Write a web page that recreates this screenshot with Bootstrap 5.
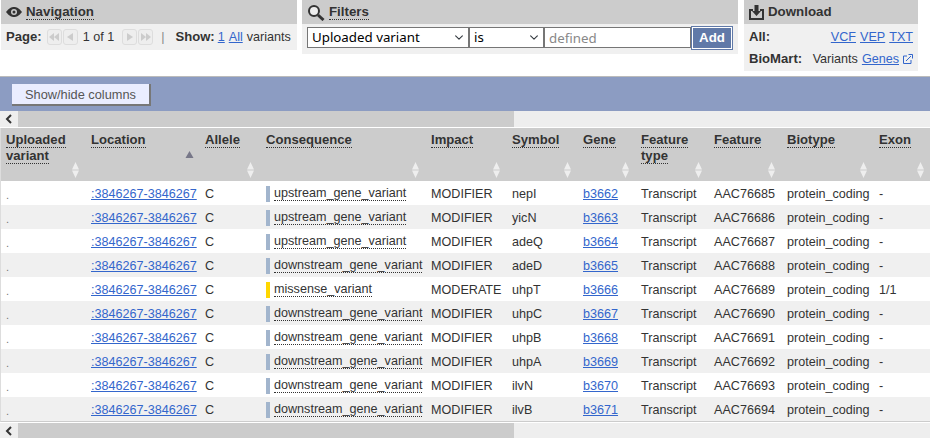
<!DOCTYPE html>
<html lang="en">
<head>
    <meta charset="UTF-8">
    <title>Variant results</title>
    <link href="https://cdn.jsdelivr.net/npm/bootstrap@5.3.0/dist/css/bootstrap.min.css" rel="stylesheet">
    <style>
        body { margin: 0; background: #fff; color: #333; font: 12.6px/16px "Liberation Sans", Arial, sans-serif; overflow: hidden; }
        a { color: #3366cc; }
        b { font-size: 13.1px; }

        /* top panels */
        .top-area { height: 76px; padding-left: 1px; align-items: flex-start; }
        .panel-nav { width: 296px; margin-right: 5px; }
        .panel-filter { width: 436px; margin-right: 6px; }
        .panel-dl { width: 174px; }
        .panel-head { height: 24px; background: #ccc; font-weight: 700; font-size: 13.3px; padding: 0 5px; gap: 4px; }
        .panel-head span { border-bottom: 1px dotted #333; line-height: 15px; }
        .panel-head span.plain { border-bottom-color: transparent; }
        .panel-body-nav { height: 26px; background: #f0f0f0; padding-left: 5px; }
        .panel-body-filter { height: 30px; background: #f0f0f0; padding: 0 0 3px 5px; }
        .panel-body-dl { height: 47px; background: #f0f0f0; padding: 5px 5px 0 5px; }
        .page-label { margin-right: 5px; }
        .pg-btn { width: 15px; height: 16px; border: 1px solid #ddd; border-radius: 3px; background: #eee; margin-right: 1px; }
        .sep { margin: 0 11px 0 7px; color: #888; }
        .show-label { margin-right: 3px; }
        .dl-line { margin-bottom: 2px; }

        /* filter controls */
        .form-select.flt, .form-control.flt {
            height: 21px; min-height: 0; border-radius: 0; border: 1px solid #767676; padding: 0 0 0 4px; color: #000;
            font: 13.3px/19px "Noto Sans", "Liberation Sans", sans-serif; box-shadow: none;
        }
        .form-select.flt { background-size: 12px 9px; background-position: right 3px center; }
        .flt-a { width: 162px; }
        .flt-b { width: 75px; }
        .flt-c { width: 147px; }
        .form-control.flt::placeholder { color: #888; }
        .add-btn { width: 42px; height: 24px; padding: 0; border-radius: 0; background: #6079a8; color: #fff; border: 1px solid #6079a8; outline: 1px solid #fff; outline-offset: -2px; font: 700 13.3px "Liberation Sans", sans-serif; }
        .add-btn:hover { background: #6079a8; color: #fff; }

        /* blue bar */
        .tool-bar { height: 35px; background: #8c9cc2; border-top: 1px solid #bbb; padding: 7px 0 0 12px; }
        .col-btn { width: 139px; height: 22px; padding: 0; border-radius: 0; background: #eaedff; color: #555; font: 12.8px "Liberation Sans", sans-serif; border: 0; border-right: 2px solid #777; border-bottom: 2px solid #777; }
        .col-btn:hover { background: #eaedff; color: #555; }

        /* fake scrollbars */
        .scroll-x { height: 16px; background: #eee; }
        .scroll-x .arrow { width: 18px; }
        .scroll-x .thumb { width: 496px; background: #ccc; }
        .scroll-low { height: 15px; margin-top: 1px; }

        /* results table */
        .tbl-wrap { margin-top: 1px; border-bottom: 1px solid #ccc; border-left: 1px solid #ddd; }
        table.vep { width: 930px; table-layout: fixed; border-collapse: collapse; margin: 0; }
        table.vep th { position: relative; height: 53px; vertical-align: top; background: #ccc; color: #333; font-size: 13.1px; font-weight: 700; line-height: 16px; padding: 4px 0 0 5px; border: 0; }
        table.vep th span { border-bottom: 1px dotted #333; }
        table.vep td { height: 24px; padding: 1px 0 0 5px; vertical-align: middle; white-space: nowrap; overflow: visible; border: 0; color: #333; background: #fff; }
        table.vep tbody tr:nth-child(even) td { background: #f0f0f0; }
        .sort-ico { position: absolute; right: 6px; bottom: 3px; }
        table.vep th .loc-up { bottom: 22px; }
        .w1 { width: 85px; } .w2 { width: 114px; } .w3 { width: 61px; } .w4 { width: 165px; }
        .w5 { width: 81px; } .w6 { width: 71px; } .w7 { width: 58px; } .w8 { width: 73px; }
        .w9 { width: 73px; } .w10 { width: 92px; } .w11 { width: 57px; }
        table.vep td.dot-cell { padding-top: 4px; font-size: 11px; color: #777; }
        .impact-bar { display: inline-block; width: 4px; height: 16px; background: #a2b5cd; margin-right: 4px; vertical-align: middle; }
        .impact-bar.mod { background: #ffd700; }
        .cons { border-bottom: 1px dotted #333; }
    </style>
</head>
<body>
    <svg width="0" height="0" class="position-absolute">
        <defs>
            <symbol id="sort" viewBox="0 0 9 16"><path d="M4.500 0 8 7.500H1zM4.500 16 1 8.500h7z" fill="#eee"/></symbol>
            <symbol id="arrow-left" viewBox="0 0 8 10"><path d="M6 1 2 5l4 4" fill="none" stroke="#333" stroke-width="2"/></symbol>
        </defs>
    </svg>

    <!-- Top panels -->
    <div class="d-flex top-area">
        <div class="panel-nav">
            <div class="panel-head d-flex align-items-center">
                <svg width="16" height="10" viewBox="0 0 16 10"><path d="M0 5C3 1 5.500 0 8 0s5 1 8 5c-3 4-5.500 5-8 5S3 9 0 5z" fill="#333"/><circle cx="8" cy="5" r="3" fill="#ccc"/><circle cx="8" cy="5" r="1.500" fill="#333"/></svg>
                <span>Navigation</span>
            </div>
            <div class="panel-body-nav d-flex align-items-center">
                <b class="page-label">Page:</b>
                <div class="pg-btn d-flex align-items-center justify-content-center"><svg width="11" height="8" viewBox="0 0 11 8"><path d="M5 0v8L0 4zM10 0v8L5 4z" fill="#ccc"/></svg></div>
                <div class="pg-btn d-flex align-items-center justify-content-center"><svg width="7" height="8" viewBox="0 0 7 8"><path d="M6 0v8L0 4z" fill="#ccc"/></svg></div>
                <span class="mx-1">1 of 1</span>
                <div class="pg-btn ms-1 d-flex align-items-center justify-content-center"><svg width="7" height="8" viewBox="0 0 7 8"><path d="M1 0v8l6-4z" fill="#ccc"/></svg></div>
                <div class="pg-btn d-flex align-items-center justify-content-center"><svg width="11" height="8" viewBox="0 0 11 8"><path d="M1 0v8l5-4zM6 0v8l5-4z" fill="#ccc"/></svg></div>
                <span class="sep">|</span>
                <b class="show-label">Show:</b>
                <a href="#" class="me-1">1</a><a href="#" class="me-1">All</a>variants
            </div>
        </div>

        <div class="panel-filter">
            <div class="panel-head d-flex align-items-center">
                <svg width="18" height="17" viewBox="0 0 18 17"><circle cx="7" cy="7" r="5" fill="#eee" stroke="#333" stroke-width="2"/><path d="m11 11 5.500 5" stroke="#333" stroke-width="3"/></svg>
                <span>Filters</span>
            </div>
            <div class="panel-body-filter d-flex align-items-center">
                <select class="form-select flt flt-a"><option>Uploaded variant</option></select>
                <select class="form-select flt flt-b"><option>is</option></select>
                <input class="form-control flt flt-c" type="text" placeholder="defined">
                <button type="button" class="btn add-btn">Add</button>
            </div>
        </div>

        <div class="panel-dl">
            <div class="panel-head d-flex align-items-center">
                <svg width="15" height="15" viewBox="0 0 15 15"><path d="M0 4h4v2H2v7h11V6h-2V4h4v11H0z" fill="#333"/><path d="M5.500 0h4v6H12L7.500 11 3 6h2.500z" fill="#333"/></svg>
                <span class="plain">Download</span>
            </div>
            <div class="panel-body-dl">
                <div class="d-flex justify-content-between dl-line">
                    <b>All:</b>
                    <div class="d-flex gap-1"><a href="#">VCF</a><a href="#">VEP</a><a href="#">TXT</a></div>
                </div>
                <div class="d-flex justify-content-between pt-1">
                    <b>BioMart:</b>
                    <div class="d-flex align-items-center">Variants <a href="#" class="ms-1">Genes</a>
                        <svg class="ms-1" width="10" height="10" viewBox="0 0 10 10"><path d="M4 2H.5v7.500H8V6" fill="none" stroke="#3366cc"/><path d="M3 7 8 2M5.500 .5h4v4" fill="none" stroke="#3366cc"/></svg>
                    </div>
                </div>
            </div>
        </div>
    </div>

    <!-- Column toggle bar -->
    <div class="tool-bar">
        <button type="button" class="btn col-btn">Show/hide columns</button>
    </div>

    <div class="scroll-x d-flex">
        <div class="arrow d-flex align-items-center justify-content-center"><svg width="8" height="10"><use href="#arrow-left"/></svg></div>
        <div class="thumb"></div>
    </div>

    <!-- Results -->
    <div class="tbl-wrap">
        <table class="vep">
            <colgroup>
                <col class="w1"><col class="w2"><col class="w3"><col class="w4"><col class="w5"><col class="w6">
                <col class="w7"><col class="w8"><col class="w9"><col class="w10"><col class="w11">
            </colgroup>
            <thead>
                <tr>
                    <th><span>Uploaded</span><br><span>variant</span><svg class="sort-ico" width="9" height="16"><use href="#sort"/></svg></th>
                    <th><span>Location</span><svg class="sort-ico loc-up" width="9" height="8" viewBox="0 0 9 8"><path d="M4.500 0 8.500 7H.5z" fill="#778"/></svg></th>
                    <th><span>Allele</span><svg class="sort-ico" width="9" height="16"><use href="#sort"/></svg></th>
                    <th><span>Consequence</span><svg class="sort-ico" width="9" height="16"><use href="#sort"/></svg></th>
                    <th><span>Impact</span><svg class="sort-ico" width="9" height="16"><use href="#sort"/></svg></th>
                    <th><span>Symbol</span><svg class="sort-ico" width="9" height="16"><use href="#sort"/></svg></th>
                    <th><span>Gene</span><svg class="sort-ico" width="9" height="16"><use href="#sort"/></svg></th>
                    <th><span>Feature</span><br><span>type</span><svg class="sort-ico" width="9" height="16"><use href="#sort"/></svg></th>
                    <th><span>Feature</span><svg class="sort-ico" width="9" height="16"><use href="#sort"/></svg></th>
                    <th><span>Biotype</span><svg class="sort-ico" width="9" height="16"><use href="#sort"/></svg></th>
                    <th><span>Exon</span><svg class="sort-ico" width="9" height="16"><use href="#sort"/></svg></th>
                </tr>
            </thead>
            <tbody>
                <tr><td class="dot-cell">.</td><td><a href="#">:3846267-3846267</a></td><td>C</td><td><i class="impact-bar"></i><span class="cons">upstream_gene_variant</span></td><td>MODIFIER</td><td>nepI</td><td><a href="#">b3662</a></td><td>Transcript</td><td>AAC76685</td><td>protein_coding</td><td>-</td></tr>
                <tr><td class="dot-cell">.</td><td><a href="#">:3846267-3846267</a></td><td>C</td><td><i class="impact-bar"></i><span class="cons">upstream_gene_variant</span></td><td>MODIFIER</td><td>yicN</td><td><a href="#">b3663</a></td><td>Transcript</td><td>AAC76686</td><td>protein_coding</td><td>-</td></tr>
                <tr><td class="dot-cell">.</td><td><a href="#">:3846267-3846267</a></td><td>C</td><td><i class="impact-bar"></i><span class="cons">upstream_gene_variant</span></td><td>MODIFIER</td><td>adeQ</td><td><a href="#">b3664</a></td><td>Transcript</td><td>AAC76687</td><td>protein_coding</td><td>-</td></tr>
                <tr><td class="dot-cell">.</td><td><a href="#">:3846267-3846267</a></td><td>C</td><td><i class="impact-bar"></i><span class="cons">downstream_gene_variant</span></td><td>MODIFIER</td><td>adeD</td><td><a href="#">b3665</a></td><td>Transcript</td><td>AAC76688</td><td>protein_coding</td><td>-</td></tr>
                <tr><td class="dot-cell">.</td><td><a href="#">:3846267-3846267</a></td><td>C</td><td><i class="impact-bar mod"></i><span class="cons">missense_variant</span></td><td>MODERATE</td><td>uhpT</td><td><a href="#">b3666</a></td><td>Transcript</td><td>AAC76689</td><td>protein_coding</td><td>1/1</td></tr>
                <tr><td class="dot-cell">.</td><td><a href="#">:3846267-3846267</a></td><td>C</td><td><i class="impact-bar"></i><span class="cons">downstream_gene_variant</span></td><td>MODIFIER</td><td>uhpC</td><td><a href="#">b3667</a></td><td>Transcript</td><td>AAC76690</td><td>protein_coding</td><td>-</td></tr>
                <tr><td class="dot-cell">.</td><td><a href="#">:3846267-3846267</a></td><td>C</td><td><i class="impact-bar"></i><span class="cons">downstream_gene_variant</span></td><td>MODIFIER</td><td>uhpB</td><td><a href="#">b3668</a></td><td>Transcript</td><td>AAC76691</td><td>protein_coding</td><td>-</td></tr>
                <tr><td class="dot-cell">.</td><td><a href="#">:3846267-3846267</a></td><td>C</td><td><i class="impact-bar"></i><span class="cons">downstream_gene_variant</span></td><td>MODIFIER</td><td>uhpA</td><td><a href="#">b3669</a></td><td>Transcript</td><td>AAC76692</td><td>protein_coding</td><td>-</td></tr>
                <tr><td class="dot-cell">.</td><td><a href="#">:3846267-3846267</a></td><td>C</td><td><i class="impact-bar"></i><span class="cons">downstream_gene_variant</span></td><td>MODIFIER</td><td>ilvN</td><td><a href="#">b3670</a></td><td>Transcript</td><td>AAC76693</td><td>protein_coding</td><td>-</td></tr>
                <tr><td class="dot-cell">.</td><td><a href="#">:3846267-3846267</a></td><td>C</td><td><i class="impact-bar"></i><span class="cons">downstream_gene_variant</span></td><td>MODIFIER</td><td>ilvB</td><td><a href="#">b3671</a></td><td>Transcript</td><td>AAC76694</td><td>protein_coding</td><td>-</td></tr>
            </tbody>
        </table>
    </div>

    <div class="scroll-x scroll-low d-flex">
        <div class="arrow d-flex align-items-center justify-content-center"><svg width="8" height="10"><use href="#arrow-left"/></svg></div>
        <div class="thumb"></div>
    </div>

    <script src="https://cdn.jsdelivr.net/npm/bootstrap@5.3.0/dist/js/bootstrap.bundle.min.js"></script>
</body>
</html>
